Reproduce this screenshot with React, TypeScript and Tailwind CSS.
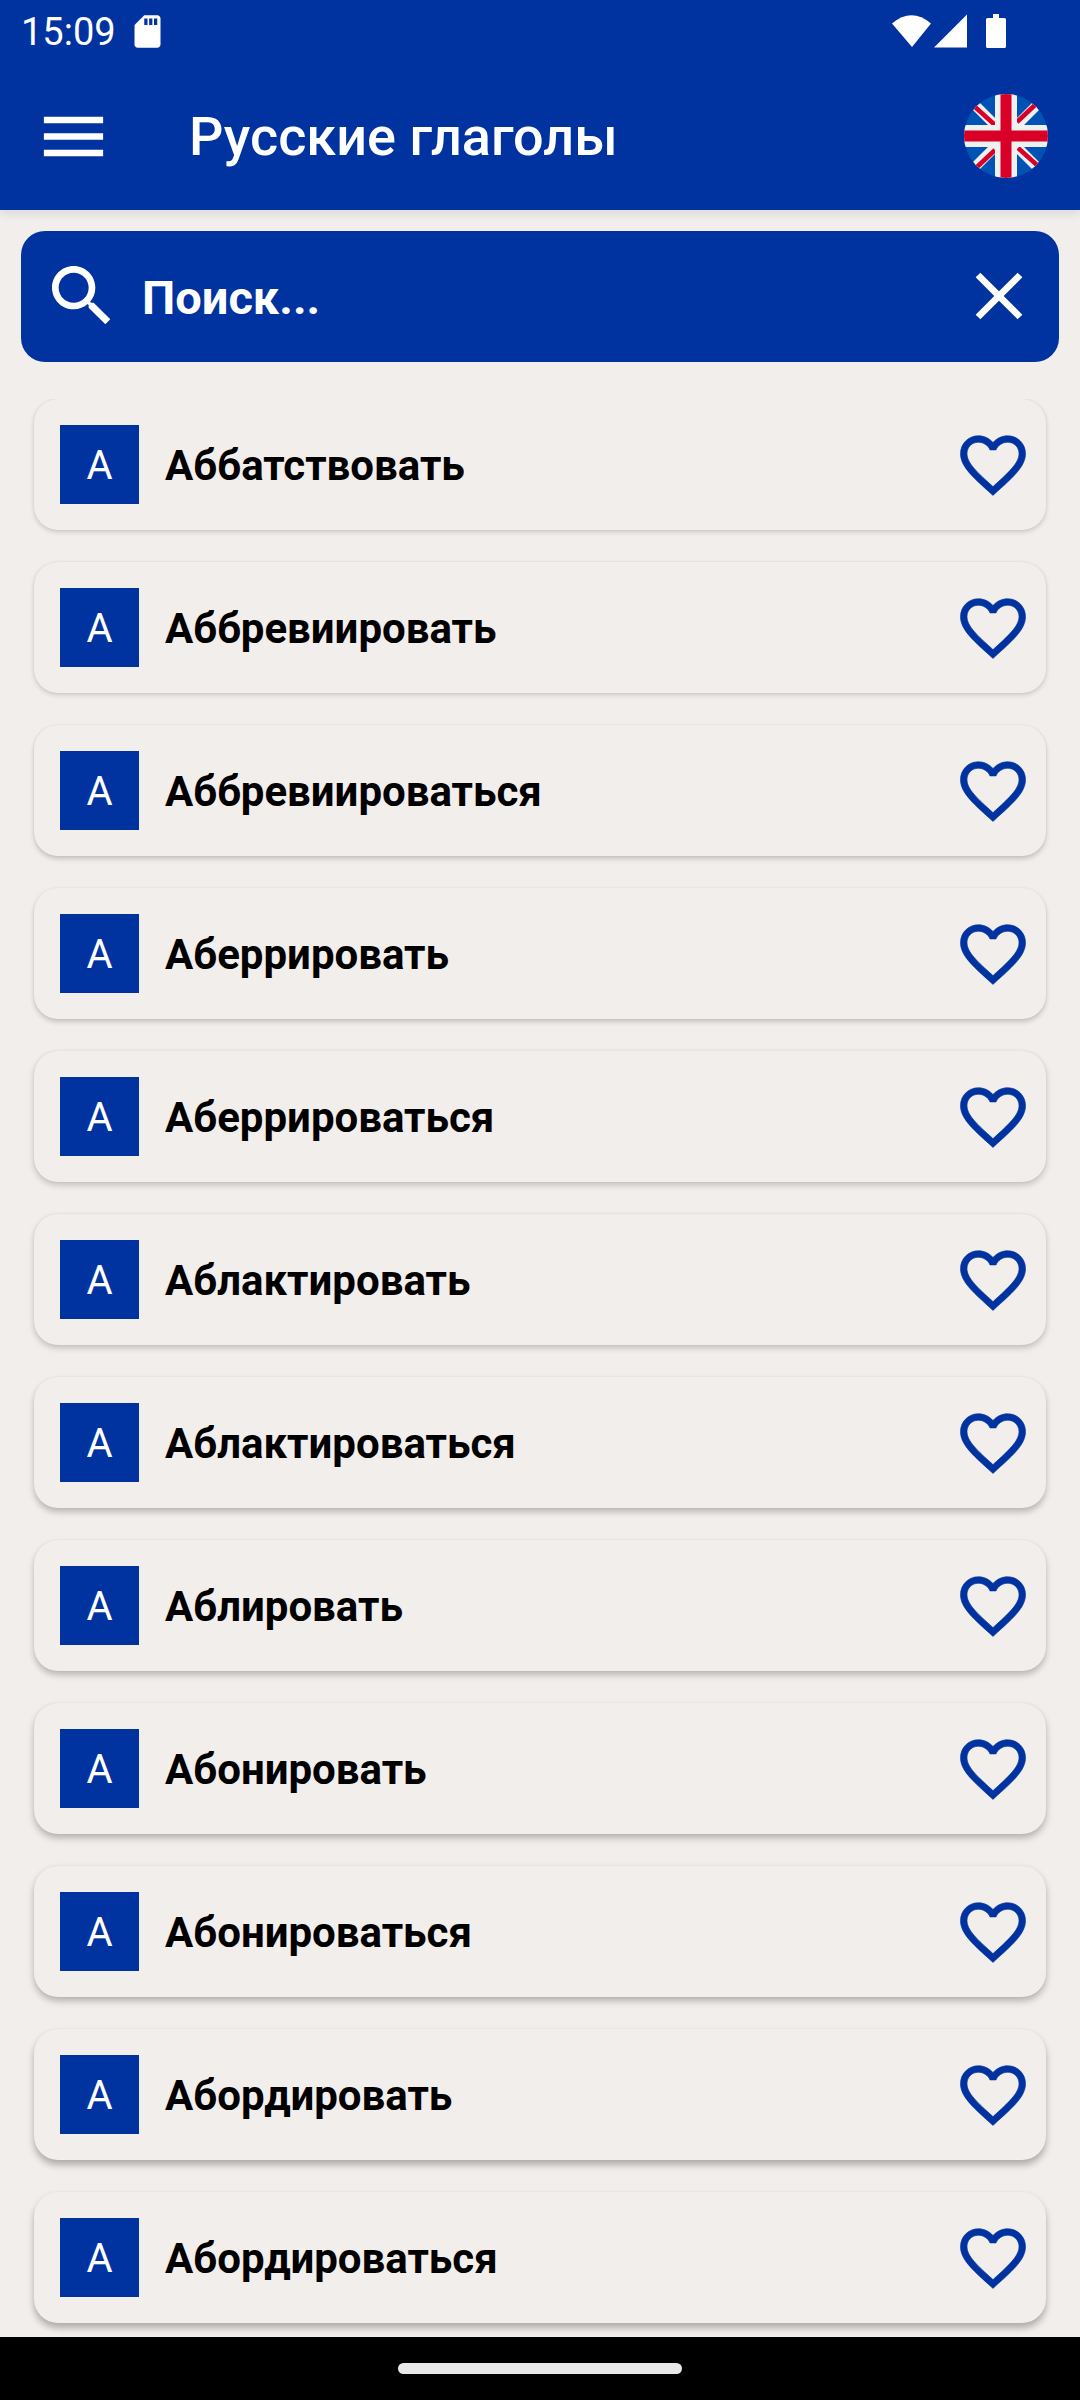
const verbs = [
  { name: "Аббатствовать", shadow: "shadow-[0_2px_5px_rgba(0,0,0,0.16),0_0_2px_rgba(0,0,0,0.08)]" },
  { name: "Аббревиировать", shadow: "shadow-[0_2px_5px_rgba(0,0,0,0.16),0_0_2px_rgba(0,0,0,0.08)]" },
  { name: "Аббревиироваться", shadow: "shadow-[0_3px_5px_rgba(0,0,0,0.18),0_0_2px_rgba(0,0,0,0.08)]" },
  { name: "Аберрировать", shadow: "shadow-[0_3px_5px_rgba(0,0,0,0.18),0_0_2px_rgba(0,0,0,0.08)]" },
  { name: "Аберрироваться", shadow: "shadow-[0_3px_6px_rgba(0,0,0,0.2),0_0_2px_rgba(0,0,0,0.07)]" },
  { name: "Аблактировать", shadow: "shadow-[0_3px_6px_rgba(0,0,0,0.2),0_0_2px_rgba(0,0,0,0.07)]" },
  { name: "Аблактироваться", shadow: "shadow-[0_4px_6px_rgba(0,0,0,0.23),0_0_2px_rgba(0,0,0,0.07)]" },
  { name: "Аблировать", shadow: "shadow-[0_4px_6px_rgba(0,0,0,0.23),0_0_2px_rgba(0,0,0,0.07)]" },
  { name: "Абонировать", shadow: "shadow-[0_4px_7px_rgba(0,0,0,0.26),0_0_2px_rgba(0,0,0,0.06)]" },
  { name: "Абонироваться", shadow: "shadow-[0_4px_7px_rgba(0,0,0,0.26),0_0_2px_rgba(0,0,0,0.06)]" },
  { name: "Абордировать", shadow: "shadow-[0_5px_7px_rgba(0,0,0,0.28),0_0_2px_rgba(0,0,0,0.06)]" },
  { name: "Абордироваться", shadow: "shadow-[0_5px_7px_rgba(0,0,0,0.28),0_0_2px_rgba(0,0,0,0.06)]" },
];

const StatusBar = () => (
  <div className="h-[62px] flex items-center pl-[21px] pr-[74px] text-white">
    <span className="text-[38px] leading-none w-[107px] mt-[2px]">15:09</span>
    <svg width="39" height="39" viewBox="0 0 24 24" fill="#ffffff">
      <path d="M18 2h-8L4.02 8 4 20c0 1.1.9 2 2 2h12c1.1 0 2-.9 2-2V4c0-1.1-.9-2-2-2zm-6 6h-2V4h2v4zm3 0h-2V4h2v4zm3 0h-2V4h2v4z" />
    </svg>
    <div className="ml-auto flex items-center">
      <svg width="39" height="34" viewBox="0 0 39 34" fill="#ffffff">
        <path d="M0 9.5Q19.5 -7 39 9.5L20 33Z" />
      </svg>
      <svg className="ml-[3px]" width="33" height="34" viewBox="0 0 33 34" fill="#ffffff">
        <path d="M0 33.5L33 0.5V33.5Z" />
      </svg>
      <svg className="ml-[19px]" width="20" height="34" viewBox="0 0 20 34" fill="#ffffff">
        <path d="M7 0H13V4H18.500Q20 4 20 5.500V32.500Q20 34 18.500 34H1.500Q0 34 0 32.500V5.500Q0 4 1.500 4H7Z" />
      </svg>
    </div>
  </div>
);

const UkFlag = () => (
  <svg className="w-[84px] h-[84px] blur-[0.6px]" viewBox="0 0 84 84">
    <defs>
      <clipPath id="flagCircle">
        <circle cx="42" cy="42" r="42" />
      </clipPath>
    </defs>
    <g clipPath="url(#flagCircle)">
      <rect width="84" height="84" fill="#0052b4" />
      <path d="M6 6L78 78M78 6L6 78" stroke="#f0f0f0" strokeWidth="10" />
      <path d="M11 13L31 31M71 11L53 28M13 73L31 56M73 71L54 54" stroke="#d80027" strokeWidth="4.5" />
      <path d="M42 0V84M0 42H84" stroke="#f0f0f0" strokeWidth="22" />
      <path d="M42 0V84M0 42H84" stroke="#d80027" strokeWidth="11" />
    </g>
  </svg>
);

const Header = () => (
  <div className="h-[210px] bg-[#00339f] shadow-[0_3px_10px_rgba(0,0,0,0.1)] relative">
    <StatusBar />
    <div className="flex items-center h-[148px] pl-[34px] pr-[32px]">
      <svg className="w-[79px] h-[79px]" viewBox="0 0 24 24" fill="#ffffff">
        <path d="M3 18h18v-2H3v2zm0-5h18v-2H3v2zm0-7v2h18V6H3z" />
      </svg>
      <span className="ml-[76px] mt-[2px] text-[54px] font-medium leading-none text-white">Русские глаголы</span>
      <div className="ml-auto">
        <UkFlag />
      </div>
    </div>
  </div>
);

const SearchBar = () => (
  <div className="mt-[21px] mx-[21px] h-[131px] rounded-[24px] bg-[#00339f] flex items-center pl-[21px] pr-[20px] text-white">
    <svg className="w-[80px] h-[80px] -mt-[2px]" viewBox="0 0 24 24" fill="#ffffff">
      <path d="M15.5 14h-.79l-.28-.27C15.41 12.59 16 11.11 16 9.5 16 5.91 13.09 3 9.500 3S3 5.91 3 9.500 5.910 16 9.500 16c1.610 0 3.090-.59 4.230-1.570l.27.28v.79l5 4.990L20.490 19l-4.990-5zm-6 0C7.010 14 5 11.990 5 9.500S7.010 5 9.500 5 14 7.010 14 9.500 11.990 14 9.500 14z" />
    </svg>
    <span className="ml-[20px] mt-[2px] text-[47px] font-bold leading-none">Поиск...</span>
    <svg className="ml-auto w-[80px] h-[80px] -mt-[2px]" viewBox="0 0 24 24" fill="#ffffff">
      <path d="M19 6.410L17.590 5 12 10.590 6.410 5 5 6.410 10.590 12 5 17.590 6.410 19 12 13.410 17.590 19 19 17.590 13.410 12z" />
    </svg>
  </div>
);

const VerbRow = ({ name, shadow }: { name: string; shadow: string }) => (
  <div className={`h-[131px] shrink-0 rounded-[24px] bg-[#f2eeeb] flex items-center pl-[26px] pr-[14px] ${shadow}`}>
    <div className="w-[79px] h-[79px] bg-[#00339f] flex items-center justify-center text-white text-[40px] leading-none pt-[2px]">
      А
    </div>
    <span className="ml-[26px] mt-[2px] text-[42px] font-bold leading-none text-black">{name}</span>
    <svg className="ml-auto w-[78px] h-[78px]" viewBox="0 0 24 24" fill="#00339f" stroke="#00339f" strokeWidth="0.2">
      <path d="M16.500 3c-1.740 0-3.410.81-4.500 2.090C10.910 3.810 9.240 3 7.500 3 4.420 3 2 5.420 2 8.500c0 3.780 3.400 6.860 8.550 11.540L12 21.350l1.450-1.320C18.600 15.360 22 12.280 22 8.500 22 5.420 19.580 3 16.500 3zm-4.400 15.550l-.1.1-.1-.1C7.140 14.240 4 11.390 4 8.500 4 6.500 5.500 5 7.500 5c1.540 0 3.040.99 3.570 2.360h1.870C13.460 5.990 14.960 5 16.500 5c2 0 3.500 1.500 3.500 3.500 0 2.890-3.140 5.740-7.900 10.050z" />
    </svg>
  </div>
);

export default function App() {
  return (
    <div className="w-[1080px] h-[2400px] flex flex-col overflow-hidden bg-[#f2eeeb] font-['Roboto',sans-serif]">
      <Header />
      <SearchBar />
      <div className="flex-1 min-h-0 overflow-hidden mt-[37px] px-[34px] pb-[14px] flex flex-col gap-[32px]">
        {verbs.map((v) => (
          <VerbRow key={v.name} name={v.name} shadow={v.shadow} />
        ))}
      </div>
      <div className="h-[63px] bg-black flex items-center justify-center">
        <div className="w-[284px] h-[11px] rounded-full bg-[#e8e8e8]" />
      </div>
    </div>
  );
}
